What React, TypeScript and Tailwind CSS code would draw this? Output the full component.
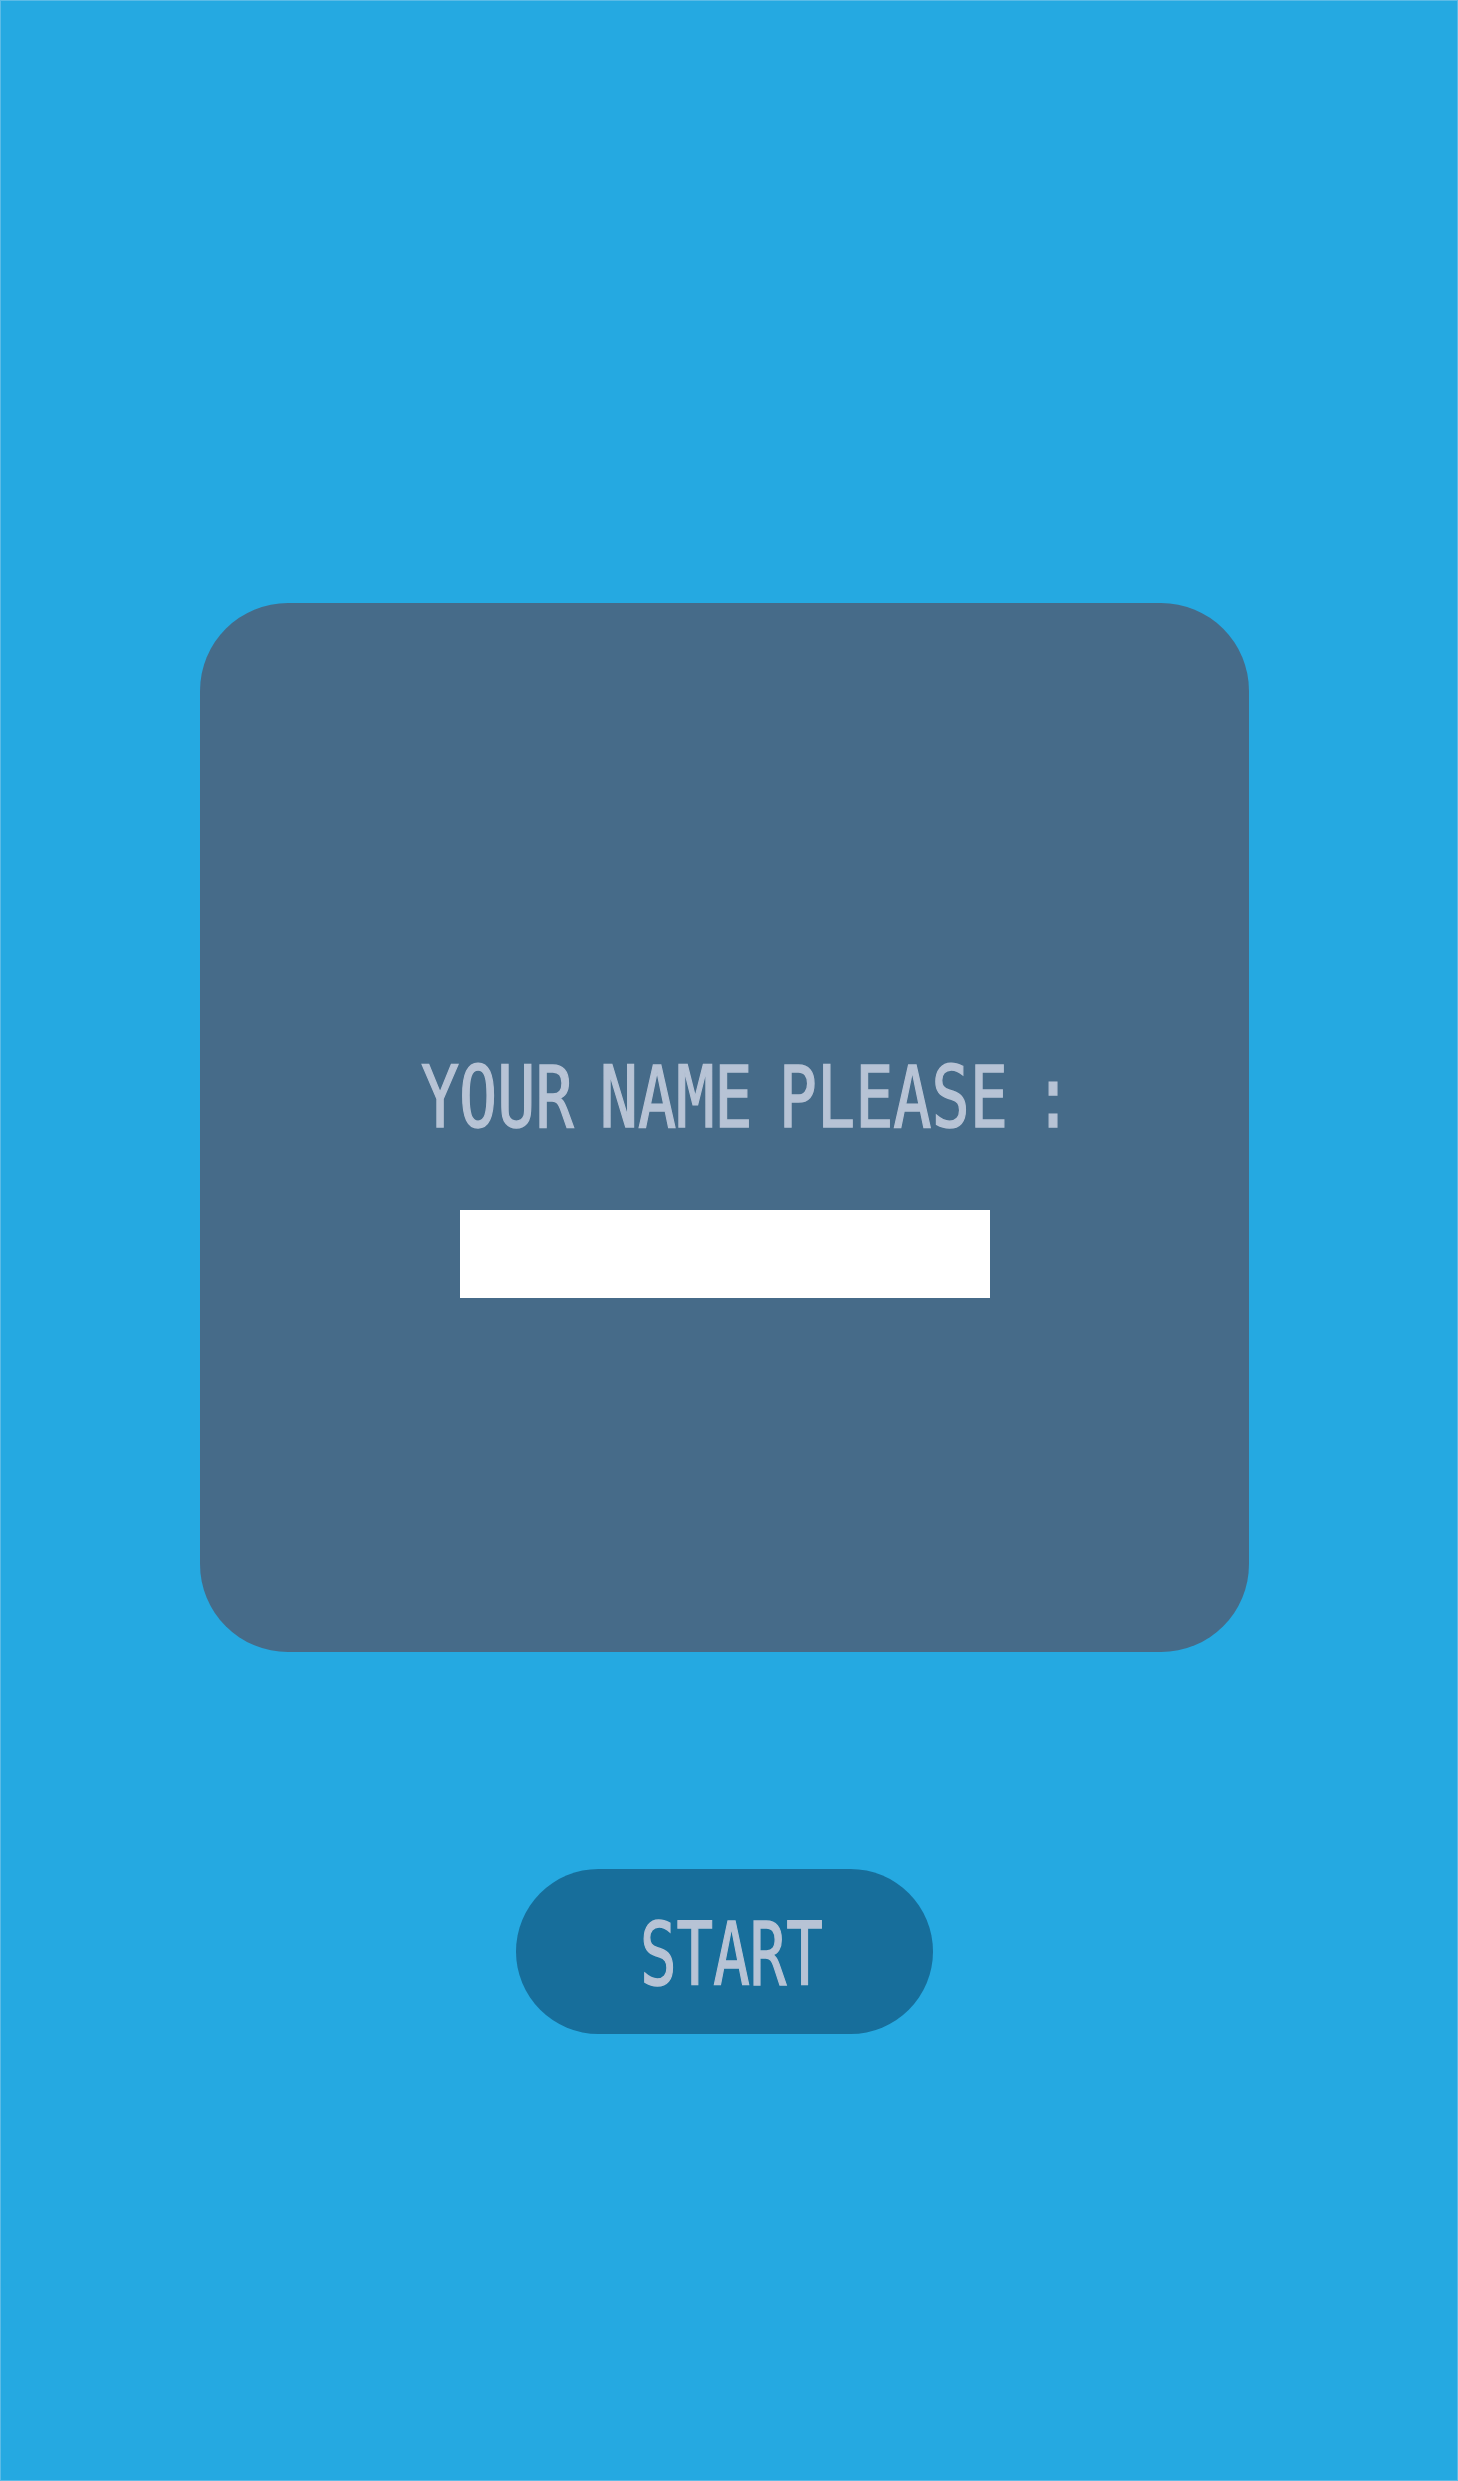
import { useState } from 'react'

const App = () => {
    const [name, setName] = useState('')

    return (
        <div className="h-[2481px] w-full bg-[#25a9e1] border border-[#5bbbe6] overflow-hidden">
            <div className="ml-[199px] w-[1049px] flex flex-col">
                {/* name card */}
                <div className="mt-[602px] h-[1049px] w-full rounded-[88px] bg-[#466b89] flex flex-col items-center pt-[452px]">
                    <h1 className="ml-[44px] text-[85px] leading-none text-[#b7c3d5] [-webkit-text-stroke:1.5px_#b7c3d5] [word-spacing:-16px] scale-x-[0.746] whitespace-nowrap font-['DejaVu_Sans_Mono',monospace]">
                        YOUR NAME PLEASE :
                    </h1>
                    <input
                        value={name}
                        onChange={e => setName(e.target.value)}
                        className="mt-[70px] h-[88px] w-[530px] bg-white outline-none px-4 text-3xl"
                    />
                </div>

                <button className="mt-[217px] self-center h-[165px] w-[417px] rounded-full bg-[#176e9b] flex items-center justify-center">
                    <span className="ml-[13px] mt-[6px] text-[88px] leading-none text-[#b7c3d5] [-webkit-text-stroke:1.5px_#b7c3d5] scale-x-[0.69] font-['DejaVu_Sans_Mono',monospace]">
                        START
                    </span>
                </button>
            </div>
        </div>
    )
}

export default App
